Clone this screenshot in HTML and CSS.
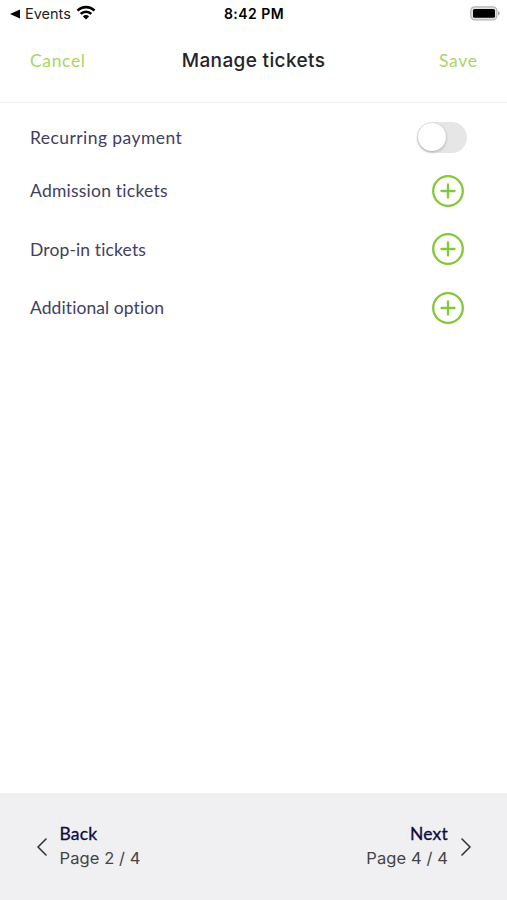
FILE: index.html
```html
<!DOCTYPE html>
<html lang="en">
<head>
<meta charset="utf-8">
<title>Manage tickets</title>
<link rel="stylesheet" href="styles.css">
</head>
<body>
<div class="screen">
  <div class="status">
    <div class="status-left">
      <svg width="10" height="10" viewBox="0 0 10 10"><path d="M0 5 10 .6V9.4Z" fill="#000"/></svg>
      <span class="events">Events</span>
      <svg class="wifi" width="20" height="15" viewBox="0 0 20 15"><g fill="none" stroke="#000" stroke-width="2.6"><path d="M1.5 5.6a12.1 12.1 0 0 1 17 0"/><path d="M4.7 8.9a7.6 7.6 0 0 1 10.6 0"/></g><path d="M10 14.5 6.9 11.4a4.4 4.4 0 0 1 6.2 0Z"/></svg>
    </div>
    <span class="time">8:42 PM</span>
    <svg class="battery" width="30" height="15" viewBox="0 0 30 15"><rect x=".8" y=".8" width="26" height="13" rx="3.8" fill="#e2e2e2" stroke="#b4b4b4" stroke-width="1.2"/><rect x="3" y="3" width="22" height="8.8" rx="1.6"/><path d="M28 5.2q1.8.6 1.8 2.1T28 9.4Z" fill="#a9a9a9"/></svg>
  </div>
  <header class="header">
    <a class="action cancel">Cancel</a>
    <h1 class="title">Manage tickets</h1>
    <a class="action save">Save</a>
  </header>
  <main class="rows">
    <div class="row row-toggle"><span class="label recurring">Recurring payment</span><span class="toggle"><span class="knob"></span></span></div>
    <div class="row"><span class="label admission">Admission tickets</span><svg class="plus" width="32" height="32" viewBox="0 0 32 32"><circle cx="16" cy="16" r="14.8"/><path d="M16 9.5v13M9.5 16h13"/></svg></div>
    <div class="row"><span class="label dropin">Drop-in tickets</span><svg class="plus" width="32" height="32" viewBox="0 0 32 32"><circle cx="16" cy="16" r="14.8"/><path d="M16 9.5v13M9.5 16h13"/></svg></div>
    <div class="row"><span class="label additional">Additional option</span><svg class="plus" width="32" height="32" viewBox="0 0 32 32"><circle cx="16" cy="16" r="14.8"/><path d="M16 9.5v13M9.5 16h13"/></svg></div>
  </main>
  <footer class="footer">
    <div class="nav">
      <svg class="chevron" width="10" height="18" viewBox="0 0 10 18"><path d="M9 1 1 9l8 8"/></svg>
      <div class="nav-text"><span class="nav-name">Back</span><span class="nav-page">Page 2 / 4</span></div>
    </div>
    <div class="nav">
      <div class="nav-text end"><span class="nav-name">Next</span><span class="nav-page">Page 4 / 4</span></div>
      <svg class="chevron" width="10" height="18" viewBox="0 0 10 18"><path d="M1 1l8 8-8 8"/></svg>
    </div>
  </footer>
</div>
</body>
</html>
```
FILE: styles.css
```css
* { box-sizing: border-box; }
body { margin: 0; background: #fff; font-family: Inter, "Liberation Sans", sans-serif; color: #242428; }
.screen { width: 507px; height: 900px; display: flex; flex-direction: column; overflow: hidden; }
svg { display: block; flex: none; }
span, a, h1 { white-space: nowrap; font-variant-ligatures: none; }
.status { height: 27px; padding: 0 7px 0 10px; display: grid; grid-template-columns: 1fr auto 1fr; align-items: center; color: #000; }
.status-left { display: flex; align-items: center; }
.events { margin-left: 5px; font-size: 14.5px; color: #222; }
.wifi { margin-left: 5px; margin-top: -2px; }
.time { font-size: 14px; font-weight: 600; letter-spacing: .45px; margin-right: 2px; }
.battery { justify-self: end; }
.header { height: 76px; padding: 0 30px 9px; border-bottom: 1px solid #f1f1f1; display: grid; grid-template-columns: 1fr auto 1fr; align-items: center; }
.title { margin: 0; font-size: 19px; font-weight: 500; letter-spacing: .36px; }
.action { font-family: Lato, sans-serif; font-size: 17.5px; color: #a5d863; }
.cancel { letter-spacing: .65px; }
.save { justify-self: end; letter-spacing: .7px; margin-right: -.7px; }
.rows { flex: 1; padding: 9.5px 43px 0 30px; }
.row { height: 58.6px; display: flex; align-items: center; justify-content: space-between; }
.row-toggle { height: 49px; margin-right: -3px; }
.label { font-family: Lato, sans-serif; font-size: 17.5px; color: #41405f; }
.recurring { letter-spacing: .43px; margin-top: 1px; }
.admission { letter-spacing: .23px; }
.dropin { letter-spacing: .13px; }
.additional { letter-spacing: .08px; }
.toggle { width: 50px; height: 31px; border-radius: 16px; background: #e6e6e7; padding: 1.5px 1px; }
.knob { display: block; width: 28px; height: 28px; border-radius: 50%; background: #fff; box-shadow: 0 1px 3px rgba(0,0,0,.28); }
.plus { fill: none; stroke: #83c73b; stroke-width: 2.3; stroke-linecap: round; }
.footer { height: 107px; padding: 0 36px 1px 36.5px; background: #f0f0f2; display: flex; justify-content: space-between; align-items: center; }
.nav { display: flex; align-items: center; gap: 13px; }
.chevron { margin-top: 1px; fill: none; stroke: #333; stroke-width: 1.6; stroke-linecap: round; stroke-linejoin: round; }
.nav-text { display: flex; flex-direction: column; padding-bottom: 2px; }
.end { align-items: flex-end; }
.nav-name { font-family: Lato, sans-serif; font-size: 17.5px; line-height: 25px; letter-spacing: .2px; color: #0f0b42; -webkit-text-stroke: .3px #0f0b42; }
.nav-page { font-size: 16.5px; line-height: 24px; color: #444; letter-spacing: .1px; }
```
